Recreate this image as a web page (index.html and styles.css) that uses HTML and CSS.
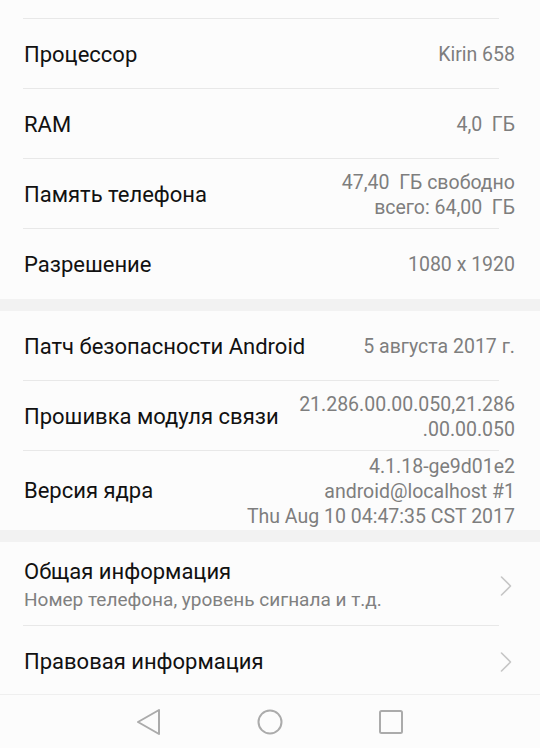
FILE: index.html
```html
<!DOCTYPE html>
<html lang="ru">
<head>
<meta charset="utf-8">
<title>О телефоне</title>
<link rel="stylesheet" href="styles.css">
</head>
<body>
<div class="screen">
  <div class="group">
    <div class="row cut"></div>
    <div class="row"><span class="title">Процессор</span><span class="value">Kirin 658</span></div>
    <div class="row"><span class="title">RAM</span><span class="value">4,0&nbsp; ГБ</span></div>
    <div class="row"><span class="title">Память телефона</span><span class="value">47,40&nbsp; ГБ свободно<br>всего: 64,00&nbsp; ГБ</span></div>
    <div class="row last"><span class="title">Разрешение</span><span class="value">1080 x 1920</span></div>
  </div>
  <div class="gap"></div>
  <div class="group">
    <div class="row"><span class="title">Патч безопасности Android</span><span class="value">5 августа 2017 г.</span></div>
    <div class="row"><span class="title">Прошивка модуля связи</span><span class="value">21.286.00.00.050,21.286<br>.00.00.050</span></div>
    <div class="row last tall"><span class="title">Версия ядра</span><span class="value">4.1.18-ge9d01e2<br>android@localhost #1<br>Thu Aug 10 04:47:35 CST 2017</span></div>
  </div>
  <div class="gap"></div>
  <div class="group">
    <div class="row link big">
      <div class="texts"><span class="title">Общая информация</span><span class="sub">Номер телефона, уровень сигнала и т.д.</span></div>
      <svg class="chev" width="12" height="20" viewBox="0 0 12 20"><polyline points="1.5,1 10.5,10 1.5,19" fill="none" stroke="#c6c6c6" stroke-width="1.6" stroke-linecap="round" stroke-linejoin="round"/></svg>
    </div>
    <div class="row link last small">
      <div class="texts"><span class="title">Правовая информация</span></div>
      <svg class="chev" width="12" height="20" viewBox="0 0 12 20"><polyline points="1.5,1 10.5,10 1.5,19" fill="none" stroke="#c6c6c6" stroke-width="1.6" stroke-linecap="round" stroke-linejoin="round"/></svg>
    </div>
  </div>
  <div class="nav">
    <svg width="24" height="26" viewBox="0 0 24 26"><polygon points="22,1 1,13 22,25" fill="none" stroke="#ababab" stroke-width="2" stroke-linejoin="round"/></svg>
    <svg width="26" height="26" viewBox="0 0 26 26"><circle cx="13" cy="13" r="11.5" fill="none" stroke="#ababab" stroke-width="2"/></svg>
    <svg width="24" height="24" viewBox="0 0 24 24"><rect x="1" y="1" width="22" height="22" rx="1.5" fill="none" stroke="#ababab" stroke-width="2"/></svg>
  </div>
</div>
</body>
</html>
```

FILE: styles.css
```css
html, body {
  margin: 0;
  padding: 0;
  background: #fcfcfc;
}
.screen {
  width: 540px;
  height: 748px;
  overflow: hidden;
  font-family: Roboto, "Noto Sans", sans-serif;
  display: flex;
  flex-direction: column;
}
.group {
  background: #fcfcfc;
}
.row {
  box-sizing: border-box;
  height: 70px;
  display: flex;
  align-items: center;
  justify-content: space-between;
  padding: 1px 25px 0 24px;
  background: linear-gradient(#e8e8e8, #e8e8e8) no-repeat 23px 100% / 476px 1px;
}
.row.cut {
  height: 19px;
}
.row.last {
  background: none;
}
.row.tall {
  height: 79px;
}
.row.big {
  height: 84px;
  padding-top: 4px;
}
.row.small {
  height: 68px;
  padding-top: 4px;
}
.title {
  font-size: 22px;
  color: #111;
  line-height: 28px;
}
.value {
  font-size: 19.5px;
  color: #7e7e7e;
  text-align: right;
  line-height: 25px;
}
.gap {
  height: 12px;
  background: #f2f2f2;
}
.texts {
  display: flex;
  flex-direction: column;
}
.sub {
  font-size: 19px;
  color: #808080;
  line-height: 28px;
}
.chev {
  margin-right: 3px;
}
.nav {
  flex: 1;
  display: flex;
  justify-content: center;
  align-items: center;
  gap: 96px;
  background: #fcfcfc;
  border-top: 1px solid #efefef;
}
```
